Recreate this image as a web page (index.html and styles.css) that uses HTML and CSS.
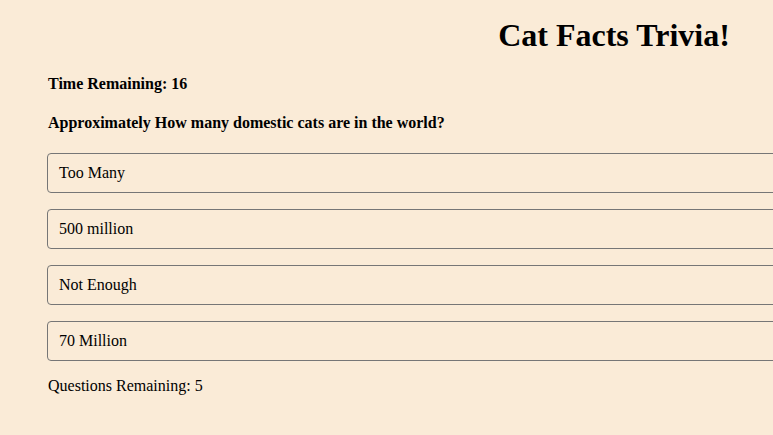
FILE: index.html
```html
<!DOCTYPE html>
<html>
<head>
<meta charset="utf-8">
<link rel="stylesheet" href="styles.css">
</head>
<body>
<div class="quiz">
  <h1 class="title">Cat Facts Trivia!</h1>
  <h4 class="timer">Time Remaining: 16</h4>
  <h4 class="question">Approximately How many domestic cats are in the world?</h4>
  <div class="answers">
    <button class="answer">Too Many</button>
    <button class="answer">500 million</button>
    <button class="answer">Not Enough</button>
    <button class="answer">70 Million</button>
  </div>
  <p class="remaining">Questions Remaining: 5</p>
</div>
</body>
</html>
```
FILE: styles.css
```css
html {
  overflow: hidden;
}
body {
  margin: 0;
  background: #faebd7;
  font-family: "Liberation Serif", "Times New Roman", serif;
  color: #000;
}
.quiz {
  width: 1134px;
  padding: 0 0 0 47px;
}
.title {
  font-size: 32px;
  font-weight: bold;
  text-align: center;
  margin: 17px 0 0;
  line-height: 37px;
}
.timer, .question {
  font-size: 16px;
  font-weight: bold;
  line-height: 18px;
  margin: 21px 0 0 1px;
}
.answers {
  display: flex;
  flex-direction: column;
  gap: 16px;
  margin-top: 21px;
}
.answer {
  display: block;
  width: 100%;
  height: 40px;
  text-align: left;
  padding: 0 11px;
  font-family: "Liberation Serif", "Times New Roman", serif;
  font-size: 16px;
  color: #000;
  background: #faebd7;
  border: 1px solid #767676;
  border-radius: 4px;
}
.remaining {
  font-size: 16px;
  line-height: 18px;
  margin: 16px 0 0 1px;
}
```
